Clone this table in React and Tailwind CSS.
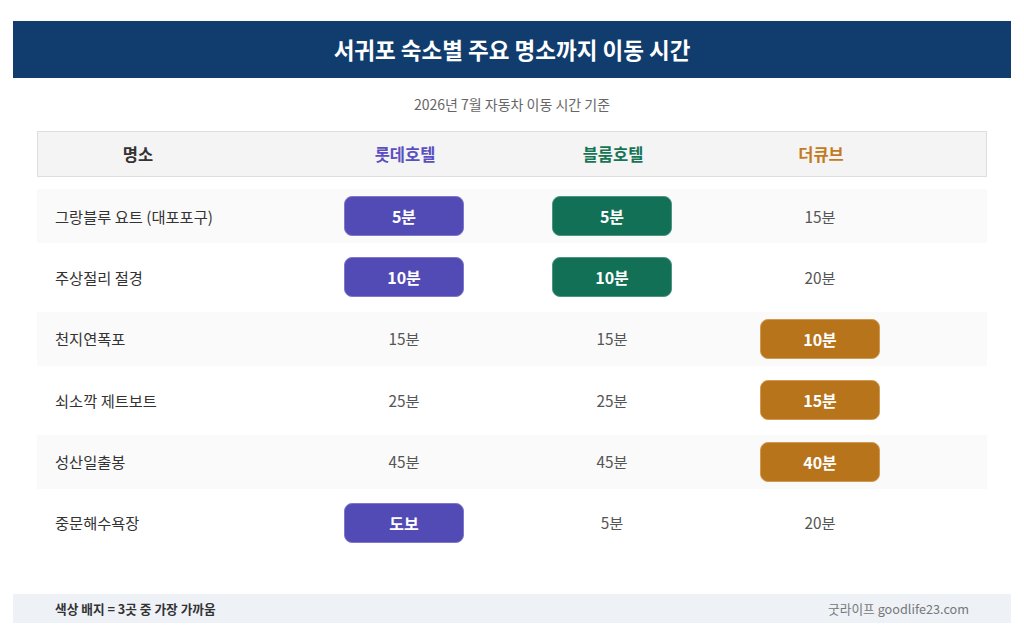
const rows = [
  { name: "그랑블루 요트 (대포포구)", v: ["5분", "5분", "15분"], hi: [0, 1] },
  { name: "주상절리 절경", v: ["10분", "10분", "20분"], hi: [0, 1] },
  { name: "천지연폭포", v: ["15분", "15분", "10분"], hi: [2] },
  { name: "쇠소깍 제트보트", v: ["25분", "25분", "15분"], hi: [2] },
  { name: "성산일출봉", v: ["45분", "45분", "40분"], hi: [2] },
  { name: "중문해수욕장", v: ["도보", "5분", "20분"], hi: [0] },
];

const badgeCls = [
  "bg-[#534bb5] border-[#7e78cc]",
  "bg-[#117055] border-[#4f9481]",
  "bg-[#b8741a] border-[#d09a55]",
];

export default function App() {
  return (
    <div
      className="w-[1024px] h-[640px] bg-white pt-[21px]"
      style={{ fontFamily: '"Noto Sans CJK KR", "Noto Sans", sans-serif' }}
    >
      <div className="mx-[13px] h-[57px] bg-[#103d6e] flex items-center justify-center">
        <h1 className="text-white text-[22.5px] font-bold leading-none">
          서귀포 숙소별 주요 명소까지 이동 시간
        </h1>
      </div>
      <div className="h-[53px] flex items-center justify-center text-[14px] text-[#666]">
        2026년 7월 자동차 이동 시간 기준
      </div>
      <div className="mx-[37px] w-[950px]">
        <div className="grid grid-cols-[263px_208px_208px_208px_1fr] h-[46px] items-center bg-[#f4f4f4] border border-[#dedede] text-[16.5px] font-bold">
          <div className="w-[200px] text-center text-[#333]">명소</div>
          <div className="text-center text-[#5a4fc0]">롯데호텔</div>
          <div className="text-center text-[#177556]">블룸호텔</div>
          <div className="text-center text-[#c27b22]">더큐브</div>
          <div />
        </div>
        <div className="mt-[12px] flex flex-col gap-[7.4px]">
          {rows.map((r, i) => (
            <div
              key={i}
              className={
                "grid grid-cols-[263px_208px_208px_208px_1fr] h-[54px] items-center " +
                (i % 2 === 0 ? "bg-[#fafafa]" : "bg-white")
              }
            >
              <div className="pl-[18px] text-[15.3px] text-[#333]">{r.name}</div>
              {r.v.map((val, j) => (
                <div key={j} className="flex justify-center">
                  {r.hi.includes(j) ? (
                    <div
                      className={
                        "w-[120px] h-[40px] rounded-[8px] border flex items-center justify-center text-white text-[16px] font-bold " +
                        badgeCls[j]
                      }
                    >
                      {val}
                    </div>
                  ) : (
                    <span className="text-[15.3px] text-[#555]">{val}</span>
                  )}
                </div>
              ))}
              <div />
            </div>
          ))}
        </div>
      </div>
      <div className="mx-[13px] mt-[44px] h-[29px] bg-[#eef2f7] flex items-center justify-between pl-[42px] pr-[42px]">
        <span className="text-[12.7px] font-bold text-[#333]">색상 배지 = 3곳 중 가장 가까움</span>
        <span className="text-[12.7px] text-[#777]">굿라이프 goodlife23.com</span>
      </div>
    </div>
  );
}
